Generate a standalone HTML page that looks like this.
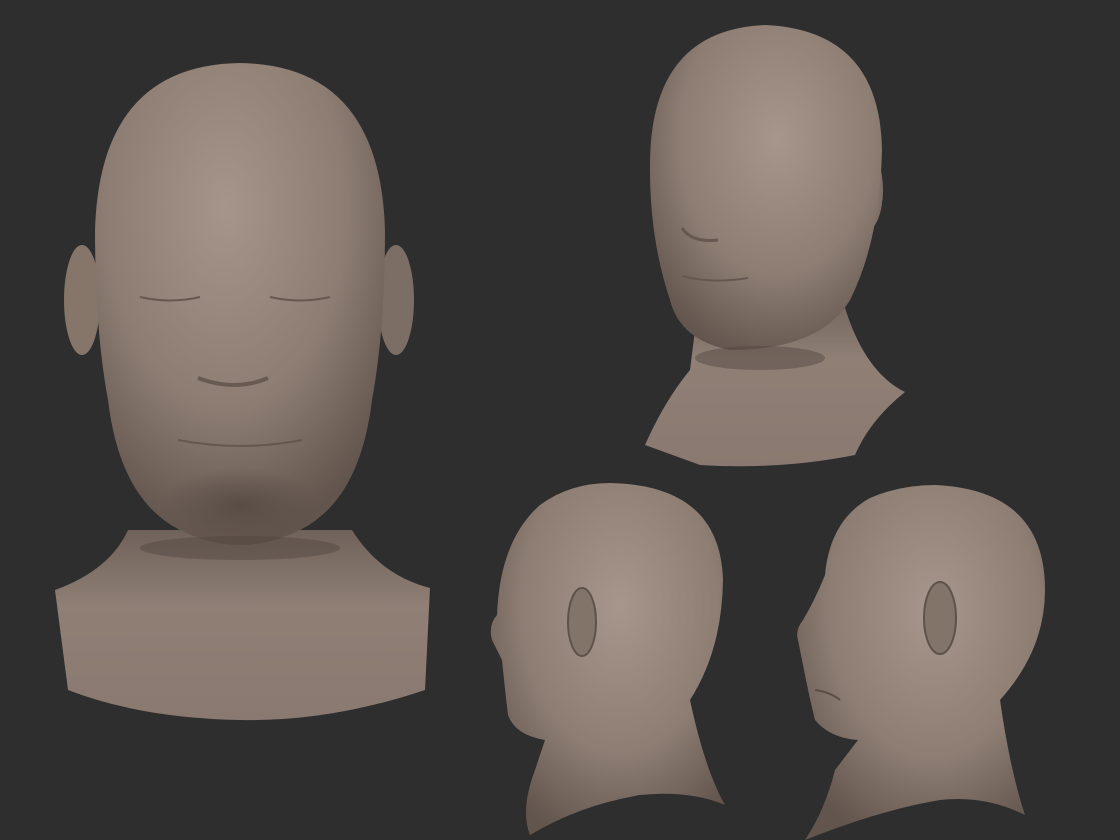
<!DOCTYPE html>
<html><head><meta charset="utf-8"><style>
html,body{margin:0;padding:0;background:#2e2e2e;width:1120px;height:840px;overflow:hidden}
svg{display:block}
</style></head><body>
<svg width="1120" height="840" viewBox="0 0 1120 840" xmlns="http://www.w3.org/2000/svg">
<defs>
<radialGradient id="g1" cx="0.45" cy="0.3" r="0.7">
<stop offset="0" stop-color="#a5958a"/><stop offset="0.6" stop-color="#8c7c72"/><stop offset="1" stop-color="#62554d"/>
</radialGradient>
<radialGradient id="g2" cx="0.55" cy="0.35" r="0.7">
<stop offset="0" stop-color="#a6968b"/><stop offset="0.6" stop-color="#8d7d73"/><stop offset="1" stop-color="#62554d"/>
</radialGradient>
<linearGradient id="gn" x1="0" y1="0" x2="0" y2="1">
<stop offset="0" stop-color="#6f625a"/><stop offset="0.4" stop-color="#8f7f75"/><stop offset="1" stop-color="#897970"/>
</linearGradient>
<radialGradient id="gs" cx="0.5" cy="0.5" r="0.5">
<stop offset="0" stop-color="#4a403a" stop-opacity="0.6"/><stop offset="1" stop-color="#4a403a" stop-opacity="0"/>
</radialGradient>
</defs>

<!-- Head 1 front -->
<path d="M55 590 Q110 570 128 530 L352 530 Q380 575 430 588 L425 690 Q330 722 240 720 Q140 718 68 690 Z" fill="url(#gn)"/>
<ellipse cx="82" cy="300" rx="18" ry="55" fill="#857669"/>
<ellipse cx="396" cy="300" rx="18" ry="55" fill="#7d6e65"/>
<path d="M240 63 Q380 65 385 230 Q385 330 372 400 Q360 500 300 530 Q270 545 240 545 Q210 545 180 530 Q120 500 108 400 Q95 330 95 230 Q100 65 240 63 Z" fill="url(#g1)"/>
<ellipse cx="240" cy="505" rx="80" ry="38" fill="url(#gs)"/>
<path d="M140 297 Q170 304 200 297" stroke="#665850" stroke-width="2" fill="none"/>
<path d="M270 297 Q300 304 330 297" stroke="#665850" stroke-width="2" fill="none"/>
<path d="M198 378 Q235 392 268 378" stroke="#5e5149" stroke-width="4" fill="none" opacity="0.8"/>
<path d="M178 440 Q240 452 302 440" stroke="#5e5149" stroke-width="2" fill="none" opacity="0.8"/>
<ellipse cx="240" cy="548" rx="100" ry="12" fill="#4f443e" opacity="0.45"/>

<!-- Head 2 3/4 -->
<path d="M645 445 Q665 400 690 370 L700 290 L840 290 Q860 370 905 392 Q870 420 855 455 Q780 470 700 465 Z" fill="url(#gn)"/>
<ellipse cx="865" cy="190" rx="18" ry="42" fill="#7f7067"/>
<path d="M765 25 Q880 30 882 150 Q880 240 850 300 Q820 350 730 350 Q680 340 670 300 Q650 240 650 170 Q648 30 765 25 Z" fill="url(#g2)"/>
<path d="M682 228 Q692 243 718 240" stroke="#665850" stroke-width="3" fill="none"/>
<path d="M682 276 Q712 284 748 278" stroke="#665850" stroke-width="2" fill="none"/>
<ellipse cx="760" cy="358" rx="65" ry="12" fill="#4f443e" opacity="0.45"/>

<!-- Head 3 back-left -->
<path d="M610 483 Q720 485 723 580 Q722 650 690 700 Q705 770 725 805 Q690 790 640 795 Q580 805 530 835 Q520 810 535 770 L545 740 Q515 735 508 715 Q505 690 502 660 L492 640 Q488 625 497 615 Q500 540 540 505 Q570 483 610 483 Z" fill="url(#g2)"/>
<ellipse cx="582" cy="622" rx="14" ry="34" fill="#837469" stroke="#5e524b" stroke-width="2"/>
<!-- Head 4 side -->
<path d="M935 485 Q1045 490 1045 590 Q1045 650 1000 700 Q1010 770 1025 815 Q985 795 940 800 Q880 810 805 840 Q825 810 835 770 L858 740 Q830 738 815 720 Q810 700 806 680 L798 640 Q795 630 803 620 Q815 600 825 575 Q830 520 870 498 Q900 485 935 485 Z" fill="url(#g2)"/>
<ellipse cx="940" cy="618" rx="16" ry="36" fill="#837469" stroke="#5e524b" stroke-width="2"/>
<path d="M815 690 Q830 692 840 700" stroke="#5a4e47" stroke-width="2" fill="none"/>
</svg>
</body></html>
